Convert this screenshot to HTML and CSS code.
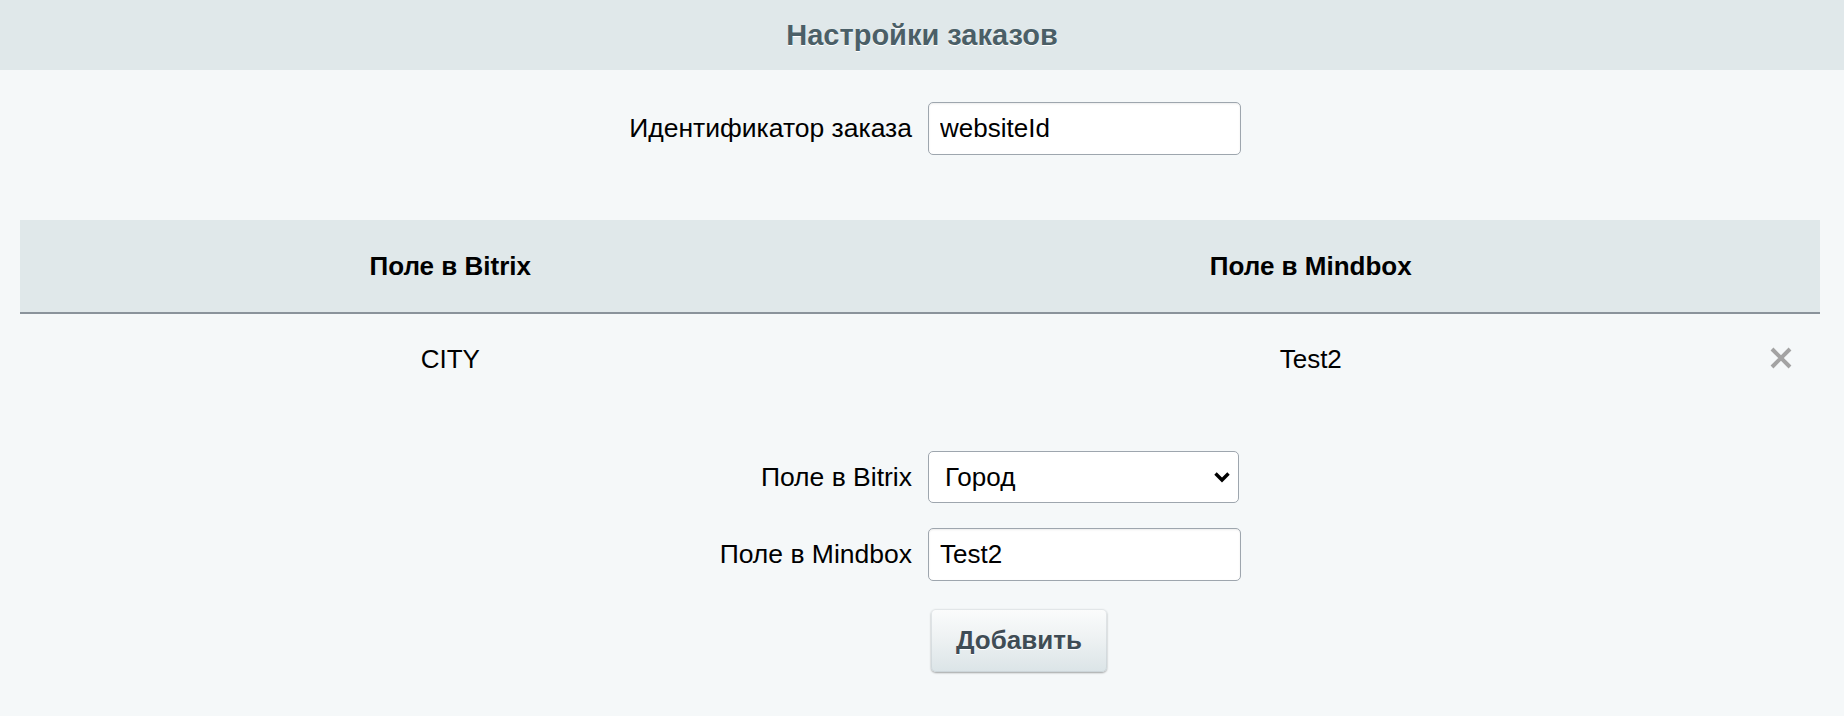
FILE: index.html
```html
<!DOCTYPE html>
<html lang="ru">
<head>
<meta charset="utf-8">
<title>Настройки заказов</title>
<link rel="stylesheet" href="styles.css">
</head>
<body>
<div class="page">
  <div class="section-title">Настройки заказов</div>

  <div class="form-row first-row">
    <label class="form-label" for="orderId">Идентификатор заказа</label>
    <div class="form-field"><input id="orderId" class="text-input" type="text" value="websiteId"></div>
  </div>

  <div class="map-table">
    <div class="map-head">
      <div class="map-cell">Поле в Bitrix</div>
      <div class="map-cell">Поле в Mindbox</div>
      <div class="map-cell"></div>
    </div>
    <div class="map-row">
      <div class="map-cell">CITY</div>
      <div class="map-cell">Test2</div>
      <div class="map-cell">
        <svg class="remove-icon" width="22" height="22" viewBox="0 0 22 22" aria-label="Удалить"><path d="M2 2 L20 20 M20 2 L2 20" stroke="#a3a3a3" stroke-width="4" stroke-linecap="butt"/></svg>
      </div>
    </div>
  </div>

  <div class="add-form">
    <div class="form-row">
      <label class="form-label" for="bxField">Поле в Bitrix</label>
      <div class="form-field">
        <span class="select-wrap">
          <select id="bxField" class="select-input"><option>Город</option></select>
          <svg class="chevron" width="18" height="12" viewBox="0 0 18 12"><path d="M2.5 2.5 L9 9 L15.5 2.5" fill="none" stroke="#000" stroke-width="3.4"/></svg>
        </span>
      </div>
    </div>
    <div class="form-row">
      <label class="form-label" for="mbField">Поле в Mindbox</label>
      <div class="form-field"><input id="mbField" class="text-input" type="text" value="Test2"></div>
    </div>
    <div class="form-row">
      <div class="form-label"></div>
      <div class="form-field"><button class="add-btn" type="button">Добавить</button></div>
    </div>
  </div>
</div>
</body>
</html>
```
FILE: styles.css
```css
html, body {
  margin: 0;
  padding: 0;
}
body {
  background: #f5f8f9;
  font-family: "Liberation Sans", Arial, Helvetica, sans-serif;
  color: #000;
}
.page {
  height: 716px;
  overflow: hidden;
}
.section-title {
  height: 70px;
  background: #e0e8ea;
  display: flex;
  align-items: center;
  justify-content: center;
  font-weight: bold;
  font-size: 29px;
  color: #4b5f67;
  text-shadow: 0 1px 0 #ffffff;
}
.form-row {
  display: grid;
  grid-template-columns: 1fr 1fr;
  align-items: center;
}
.first-row {
  margin-top: 32px;
}
.form-label {
  text-align: right;
  padding-right: 10px;
  font-size: 26.5px;
}
.form-field {
  padding-left: 6px;
}
.text-input,
.select-input {
  box-sizing: border-box;
  width: 313px;
  height: 53px;
  border: 1.5px solid #9ea6ae;
  border-radius: 5px;
  background: #fff;
  font-family: "Liberation Sans", Arial, Helvetica, sans-serif;
  font-size: 26px;
  color: #000;
  padding: 0 11px;
  margin: 0;
  box-shadow: inset 0 1px 2px rgba(0,0,0,0.08);
  outline: none;
  display: block;
}
.select-wrap {
  position: relative;
  display: block;
  width: 311px;
}
.select-input {
  width: 311px;
  height: 52px;
  appearance: none;
  -webkit-appearance: none;
  padding: 0 40px 0 16px;
  box-shadow: none;
}
.chevron {
  position: absolute;
  right: 8px;
  top: 20px;
  pointer-events: none;
}
.map-table {
  margin: 65px 24px 0 20px;
}
.map-head,
.map-row {
  display: grid;
  grid-template-columns: 1fr 1fr 79px;
  align-items: center;
}
.map-head {
  height: 92px;
  background: #e0e8ea;
  border-bottom: 2px solid #8a939b;
  font-weight: bold;
  font-size: 26px;
}
.map-row {
  height: 90px;
  font-size: 26px;
}
.map-cell {
  text-align: center;
}
.remove-icon {
  display: block;
  margin: 0 auto 3px;
}
.add-form {
  margin-top: 47px;
  display: flex;
  flex-direction: column;
  gap: 25px;
}
.add-form .form-row:last-child {
  margin-top: 3px;
}
.add-btn {
  margin-left: 3px;
  width: 176px;
  height: 63px;
  border: none;
  border-radius: 5px;
  background: linear-gradient(to bottom, #fbfcfc 0%, #eef2f3 45%, #dbe4e7 100%);
  box-shadow: 0 1px 2px rgba(0,0,0,0.35), inset 0 0 0 1px rgba(180,190,195,0.35);
  font-family: "Liberation Sans", Arial, Helvetica, sans-serif;
  font-weight: bold;
  font-size: 26px;
  color: #3f4c55;
  text-shadow: 0 1px 0 #fff;
  cursor: pointer;
}
```
